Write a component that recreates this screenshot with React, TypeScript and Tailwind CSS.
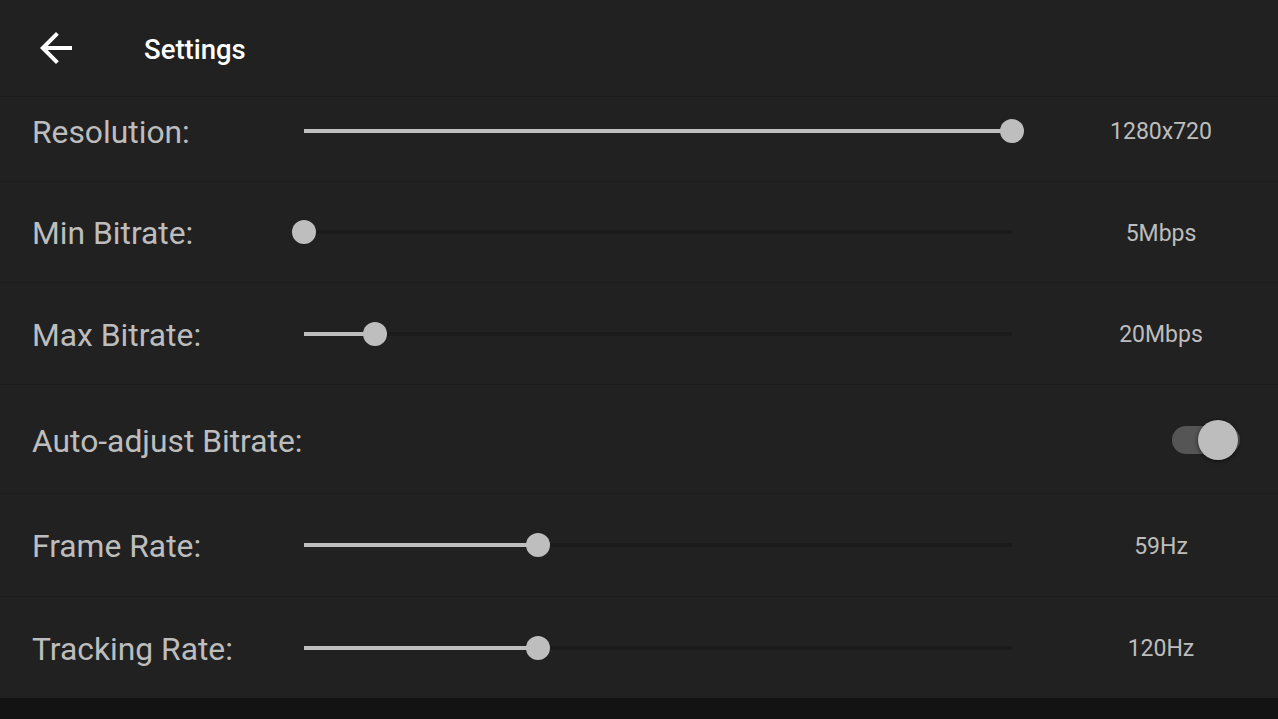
import { useState } from 'react';

const font = { fontFamily: 'Roboto, "Noto Sans", sans-serif' };

const BackArrow = () => (
  <svg width="48" height="48" viewBox="0 0 24 24" fill="#ffffff">
    <path d="M20 11H7.83l5.59-5.59L12 4l-8 8 8 8 1.41-1.41L7.83 13H20v-2z" />
  </svg>
);

// thumb center moves over 708px of track
const Slider = ({ value }: { value: number }) => {
  const pct = `${value * 100}%`;
  return (
    <div className="relative w-[732px] h-6">
      <div className="absolute left-3 right-3 top-[10px] h-1 bg-[#1b1b1b]">
        <div className="h-full bg-[#bebebe]" style={{ width: pct }}></div>
        <div
          className="absolute top-1/2 h-6 w-6 -translate-x-1/2 -translate-y-1/2 rounded-full bg-[#bebebe]"
          style={{ left: pct }}
        ></div>
      </div>
    </div>
  );
};

const Toggle = ({ on }: { on: boolean }) => (
  <div className="relative w-[68px] h-[40px] flex items-center">
    <div className={`h-[28px] w-[68px] rounded-full ${on ? 'bg-[#555555]' : 'bg-[#3a3a3a]'}`}></div>
    <div
      className={`absolute top-0 h-10 w-10 rounded-full bg-[#bdbdbd] shadow-[0_1px_4px_rgba(0,0,0,0.6)] ${
        on ? 'right-[2px]' : 'left-0'
      }`}
    ></div>
  </div>
);

const SliderRow = ({
  label,
  value,
  text,
  className,
}: {
  label: string;
  value: number;
  text: string;
  className: string;
}) => (
  <div className={`flex items-center pl-[32px] border-b border-[#1b1b1b] ${className}`}>
    <span className="w-[260px] shrink-0 translate-y-[2px] text-[31.8px] text-[#bdbdbd]">{label}</span>
    <Slider value={value} />
    <span className="ml-[37px] w-[200px] translate-y-[2px] text-center text-[23px] text-[#bdbdbd]">{text}</span>
  </div>
);

export default function App() {
  const [auto, setAuto] = useState(true);
  return (
    <div className="w-[1278px] h-[719px] bg-[#212121] flex flex-col overflow-hidden" style={font}>
      <div className="h-[97px] shrink-0 flex items-center pl-8 border-b border-[#1b1b1b]">
        <BackArrow />
        <span className="ml-[64px] translate-y-[2px] text-[27.5px] font-medium text-white">Settings</span>
      </div>
      <div className="h-[601px] shrink-0 overflow-hidden">
        <SliderRow label="Resolution:" value={1} text="1280x720" className="-mt-[17px] h-[102px]" />
        <SliderRow label="Min Bitrate:" value={0} text="5Mbps" className="h-[101px]" />
        <SliderRow label="Max Bitrate:" value={0.1} text="20Mbps" className="h-[102px]" />
        <div className="h-[109px] flex items-center justify-between pl-[32px] pr-[38px] border-b border-[#1b1b1b]">
          <span className="translate-y-[3px] text-[31.8px] text-[#bdbdbd]">Auto-adjust Bitrate:</span>
          <div onClick={() => setAuto(!auto)} className="cursor-pointer translate-y-[1px]">
            <Toggle on={auto} />
          </div>
        </div>
        <SliderRow label="Frame Rate:" value={0.33} text="59Hz" className="h-[103px]" />
        <SliderRow label="Tracking Rate:" value={0.33} text="120Hz" className="h-[101px] border-b-0" />
      </div>
      <div className="h-[21px] shrink-0 bg-[#131313]"></div>
    </div>
  );
}
